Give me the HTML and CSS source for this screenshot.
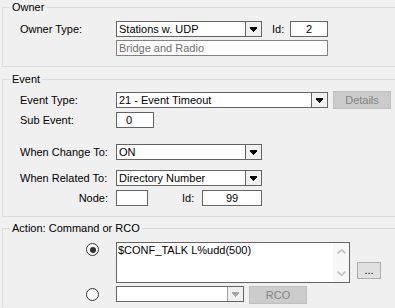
FILE: index.html
```html
<!DOCTYPE html>
<html>
<head>
<meta charset="utf-8">
<link rel="stylesheet" href="styles.css">
</head>
<body>
<fieldset class="group owner">
  <legend>Owner</legend>
  <div class="row">
    <span class="lbl">Owner Type:</span>
    <div class="combo w146">
      <span class="val">Stations w. UDP</span>
      <span class="btn"><svg width="7" height="5" viewBox="0 0 7 5" shape-rendering="crispEdges"><path d="M0 0h7v2H0zM1 2h5v1H1zM2 3h3v1H2zM3 4h1v1H3z" fill="#000"/></svg></span>
    </div>
    <span class="id-lbl">Id:</span>
    <div class="field num w38">2</div>
  </div>
  <div class="row gap3">
    <span class="lbl"></span>
    <div class="field disabled w212">Bridge and Radio</div>
  </div>
</fieldset>

<fieldset class="group event">
  <legend>Event</legend>
  <div class="row h18">
    <span class="lbl">Event Type:</span>
    <div class="combo w212">
      <span class="val">21 - Event Timeout</span>
      <span class="btn"><svg width="7" height="5" viewBox="0 0 7 5" shape-rendering="crispEdges"><path d="M0 0h7v2H0zM1 2h5v1H1zM2 3h3v1H2zM3 4h1v1H3z" fill="#000"/></svg></span>
    </div>
    <button class="pbtn dis details">Details</button>
  </div>
  <div class="row gap3">
    <span class="lbl">Sub Event:</span>
    <div class="field w38 sub">0</div>
  </div>
  <div class="row gap16">
    <span class="lbl">When Change To:</span>
    <div class="combo w146">
      <span class="val">ON</span>
      <span class="btn"><svg width="7" height="5" viewBox="0 0 7 5" shape-rendering="crispEdges"><path d="M0 0h7v2H0zM1 2h5v1H1zM2 3h3v1H2zM3 4h1v1H3z" fill="#000"/></svg></span>
    </div>
  </div>
  <div class="row gap10">
    <span class="lbl">When Related To:</span>
    <div class="combo w146">
      <span class="val">Directory Number</span>
      <span class="btn"><svg width="7" height="5" viewBox="0 0 7 5" shape-rendering="crispEdges"><path d="M0 0h7v2H0zM1 2h5v1H1zM2 3h3v1H2zM3 4h1v1H3z" fill="#000"/></svg></span>
    </div>
  </div>
  <div class="row gap4">
    <span class="lbl right">Node:</span>
    <div class="field w32"></div>
    <span class="id-lbl node-id">Id:</span>
    <div class="field num w60">99</div>
  </div>
</fieldset>

<fieldset class="group action">
  <legend>Action: Command or RCO</legend>
  <div class="arow">
    <span class="radio on"></span>
    <div class="textarea">
      <div class="ta-text">$CONF_TALK L%udd(500)</div>
      <div class="sbar">
        <svg width="9" height="5" viewBox="0 0 9 5"><path d="M0.5 4.5L4.5 0.8L8.5 4.5" fill="none" stroke="#c2c2c2" stroke-width="1.6"/></svg>
        <svg width="9" height="5" viewBox="0 0 9 5"><path d="M0.5 0.5L4.5 4.2L8.5 0.5" fill="none" stroke="#c2c2c2" stroke-width="1.6"/></svg>
      </div>
    </div>
    <button class="pbtn dots">...</button>
  </div>
  <div class="arow second">
    <span class="radio"></span>
    <div class="combo w128">
      <span class="val"></span>
      <span class="btn"><svg width="7" height="5" viewBox="0 0 7 5" shape-rendering="crispEdges"><path d="M0 0h7v2H0zM1 2h5v1H1zM2 3h3v1H2zM3 4h1v1H3z" fill="#a6a6a6"/></svg></span>
    </div>
    <button class="pbtn dis rco">RCO</button>
  </div>
</fieldset>
</body>
</html>
```

FILE: styles.css
```css
html, body {
  margin: 0;
  padding: 0;
  overflow: hidden;
  background: #f0f0f0;
}
body {
  width: 395px;
  height: 308px;
  font-family: "Liberation Sans", Arial, sans-serif;
  font-size: 11px;
  color: #000;
}
.group {
  margin: 0 0 0 2px;
  width: 393px;
  box-sizing: border-box;
  border: 1px solid #dcdcdc;
  border-right: none;
  padding: 0 0 0 17px;
  min-inline-size: 0;
}
.group legend {
  margin-left: -10px;
  padding: 0 2px;
  line-height: 13px;
  height: 13px;
  font-size: 11px;
}
.owner {
  margin-top: 1px;
  padding-top: 7px;
  padding-bottom: 10px;
}
.event {
  margin-top: 6px;
  padding-top: 5px;
  padding-bottom: 10px;
}
.action {
  margin-top: 5px;
  padding-top: 7px;
  padding-bottom: 3px;
  border-bottom: none;
}
.row {
  display: flex;
  align-items: center;
  height: 16px;
}
.row.h18 { height: 18px; }
.gap3 { margin-top: 3px; }
.gap4 { margin-top: 4px; }
.gap10 { margin-top: 10px; }
.gap16 { margin-top: 16px; }
.lbl {
  width: 96px;
  flex: none;
  white-space: nowrap;
}
.lbl.right {
  text-align: right;
  padding-right: 8px;
  box-sizing: border-box;
}
.id-lbl {
  margin-left: 10px;
  width: 18px;
  flex: none;
}
.node-id {
  margin-left: 34px;
  width: 20px;
}
.combo {
  display: flex;
  height: 16px;
  box-sizing: border-box;
  border: 1px solid #646464;
  background: #fff;
  flex: none;
}
.combo .val {
  flex: 1;
  padding-left: 2px;
  line-height: 14px;
  white-space: nowrap;
  overflow: hidden;
}
.combo .btn {
  width: 15px;
  border-left: 1px solid #646464;
  background: #f0f0f0;
  display: flex;
  align-items: center;
  justify-content: center;
}
.combo .btn svg { display: block; }
.w32 { width: 32px; }
.w38 { width: 38px; }
.w60 { width: 60px; }
.w128 { width: 128px; }
.w146 { width: 146px; }
.w212 { width: 212px; }
.field {
  height: 16px;
  box-sizing: border-box;
  border: 1px solid #646464;
  background: #fff;
  padding-left: 2px;
  line-height: 14px;
  flex: none;
  white-space: nowrap;
}
.field.num {
  text-align: center;
  padding-left: 0;
}
.field.sub { padding-left: 9px; }
.field.disabled {
  border-color: #838383;
  color: #6d6d6d;
}
.pbtn {
  font-family: "Liberation Sans", Arial, sans-serif;
  font-size: 11px;
  box-sizing: border-box;
  margin: 0;
  padding: 0;
  border: 1px solid #adadad;
  background: #e1e1e1;
  color: #000;
  flex: none;
}
.pbtn.dis {
  background: #cccccc;
  border-color: #bfbfbf;
  color: #838383;
}
.details {
  width: 58px;
  height: 18px;
  margin-left: 5px;
}
.arow {
  display: flex;
  align-items: flex-start;
}
.radio {
  flex: none;
  width: 13px;
  height: 13px;
  box-sizing: border-box;
  border: 1px solid #333;
  border-radius: 50%;
  background: #fff;
  margin: 1px 17px 0 66px;
  position: relative;
}
.radio.on::after {
  content: "";
  position: absolute;
  left: 2.5px;
  top: 2.5px;
  width: 6px;
  height: 6px;
  border-radius: 50%;
  background: #333;
}
.textarea {
  width: 234px;
  height: 41px;
  box-sizing: border-box;
  border: 1px solid #646464;
  background: #fff;
  display: flex;
  flex: none;
}
.ta-text {
  flex: 1;
  padding: 1px 0 0 1px;
  line-height: 13px;
}
.sbar {
  width: 16px;
  background: #f7f7f7;
  display: flex;
  flex-direction: column;
  align-items: center;
  justify-content: space-between;
  padding: 6px 0 6px;
  box-sizing: border-box;
}
.sbar svg { display: block; }
.dots {
  width: 24px;
  height: 17px;
  margin: 20px 0 0 7px;
  line-height: 13px;
}
.arow.second {
  margin-top: 3px;
}
.second .radio {
  margin-top: 2px;
}
.second .combo .btn { border-left-color: #a0a0a0; }
.rco {
  width: 58px;
  height: 18px;
  margin-left: 5px;
}
```
